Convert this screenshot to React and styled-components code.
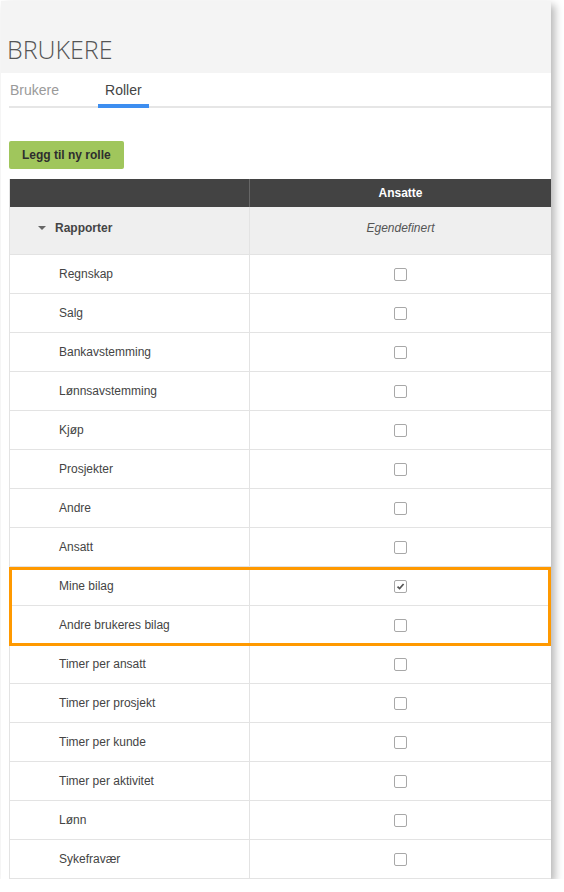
import React from 'react';
import styled, { createGlobalStyle } from 'styled-components';

const Global = createGlobalStyle`
  body {
    margin: 0;
    background: #fff;
    font-family: "Liberation Sans", Arial, sans-serif;
  }
`;

const Frame = styled.div`
  width: 550px;
  margin: 1px 0 0 1px;
  background: #fff;
  box-shadow: 4px 4px 8px rgba(0, 0, 0, 0.28);
`;

const Header = styled.div`
  height: 72px;
  background: #f4f4f4;
  display: flex;
  align-items: flex-end;
  padding: 0 0 10px 6px;
  box-sizing: border-box;
`;

const Title = styled.h1`
  margin: 0;
  font-family: "Open Sans", sans-serif;
  font-weight: 300;
  font-size: 25px;
  line-height: 28px;
  color: #555;
`;

const Tabs = styled.div`
  display: flex;
  margin-left: 8px;
  height: 33px;
  border-bottom: 2px solid #e6e6e6;
`;

const Tab = styled.div`
  font-size: 14px;
  color: ${p => (p.active ? '#444' : '#9a9a9a')};
  padding: 9px ${p => (p.active ? '7px' : '0')} 0 ${p => (p.active ? '7px' : '1px')};
  margin-right: ${p => (p.active ? '0' : '39px')};
  border-bottom: 4px solid ${p => (p.active ? '#3d8ef0' : 'transparent')};
  margin-bottom: -2px;
  box-sizing: border-box;
`;

const Content = styled.div`
  padding: 33px 0 0 8px;
`;

const AddButton = styled.button`
  background: #a0c65c;
  border: none;
  border-radius: 2px;
  height: 28px;
  padding: 0 13px;
  font-family: "Liberation Sans", Arial, sans-serif;
  font-weight: bold;
  font-size: 12px;
  color: #2e2e2e;
  margin-bottom: 10px;
`;

const Table = styled.div`
  display: grid;
  grid-template-columns: 239px 1fr;
  border-left: 1px solid #e3e3e3;
`;

const HeadCell = styled.div`
  height: 28px;
  background: #434343;
  color: #fff;
  font-weight: bold;
  font-size: 12px;
  display: flex;
  align-items: center;
  justify-content: center;
  border-left: ${p => (p.divider ? '1px solid #666' : 'none')};
`;

const Row = styled.div`
  display: contents;
`;

const Cell = styled.div`
  height: ${p => (p.group ? '48px' : '39px')};
  box-sizing: border-box;
  background: ${p => (p.group ? '#efefef' : '#fff')};
  border-bottom: 1px solid #e3e3e3;
  border-left: ${p => (p.divider ? '1px solid #e3e3e3' : 'none')};
  display: flex;
  align-items: center;
  justify-content: ${p => (p.center ? 'center' : 'flex-start')};
  padding-left: ${p => (p.center ? '0' : p.group ? '28px' : '49px')};
  padding-bottom: ${p => (p.group ? '6px' : '0')};
  font-size: 12px;
  color: #444;
`;

const GroupLabel = styled.span`
  font-weight: bold;
  color: #444;
  display: flex;
  align-items: center;
  gap: 9px;
`;

const Caret = styled.span`
  width: 0;
  height: 0;
  border-left: 4px solid transparent;
  border-right: 4px solid transparent;
  border-top: 4px solid #666;
`;

const Italic = styled.span`
  font-style: italic;
  color: #555;
`;

const Box = styled.span`
  width: 13px;
  height: 13px;
  box-sizing: border-box;
  border: 1px solid #a8a8a8;
  border-radius: 2px;
  display: flex;
  align-items: center;
  justify-content: center;
  background: #fff;
`;

const Highlight = styled.div`
  display: grid;
  grid-column: 1 / 3;
  grid-template-columns: subgrid;
  position: relative;
  &::after {
    content: "";
    position: absolute;
    inset: 0 0 -1px -1px;
    border: 3px solid #ff9900;
    pointer-events: none;
  }
`;

const Check = ({ checked }) => (
  <Box>
    {checked && (
      <svg width="9" height="9" viewBox="0 0 9 9">
        <path d="M1.5 4.6 L3.6 6.6 L7.6 2" fill="none" stroke="#555" strokeWidth="1.7" />
      </svg>
    )}
  </Box>
);

const Item = ({ label, checked }) => (
  <Row>
    <Cell>{label}</Cell>
    <Cell divider center>
      <Check checked={checked} />
    </Cell>
  </Row>
);

const before = ['Regnskap', 'Salg', 'Bankavstemming', 'Lønnsavstemming', 'Kjøp', 'Prosjekter', 'Andre', 'Ansatt'];
const after = ['Timer per ansatt', 'Timer per prosjekt', 'Timer per kunde', 'Timer per aktivitet', 'Lønn', 'Sykefravær'];

export default function App() {
  return (
    <>
      <Global />
      <Frame>
        <Header>
          <Title>BRUKERE</Title>
        </Header>
        <Tabs>
          <Tab>Brukere</Tab>
          <Tab active>Roller</Tab>
        </Tabs>
        <Content>
          <AddButton>Legg til ny rolle</AddButton>
          <Table>
            <HeadCell />
            <HeadCell divider>Ansatte</HeadCell>
            <Row>
              <Cell group>
                <GroupLabel>
                  <Caret />
                  Rapporter
                </GroupLabel>
              </Cell>
              <Cell group divider center>
                <Italic>Egendefinert</Italic>
              </Cell>
            </Row>
            {before.map(l => (
              <Item key={l} label={l} />
            ))}
            <Highlight>
              <Item label="Mine bilag" checked />
              <Item label="Andre brukeres bilag" />
            </Highlight>
            {after.map(l => (
              <Item key={l} label={l} />
            ))}
          </Table>
        </Content>
      </Frame>
    </>
  );
}
